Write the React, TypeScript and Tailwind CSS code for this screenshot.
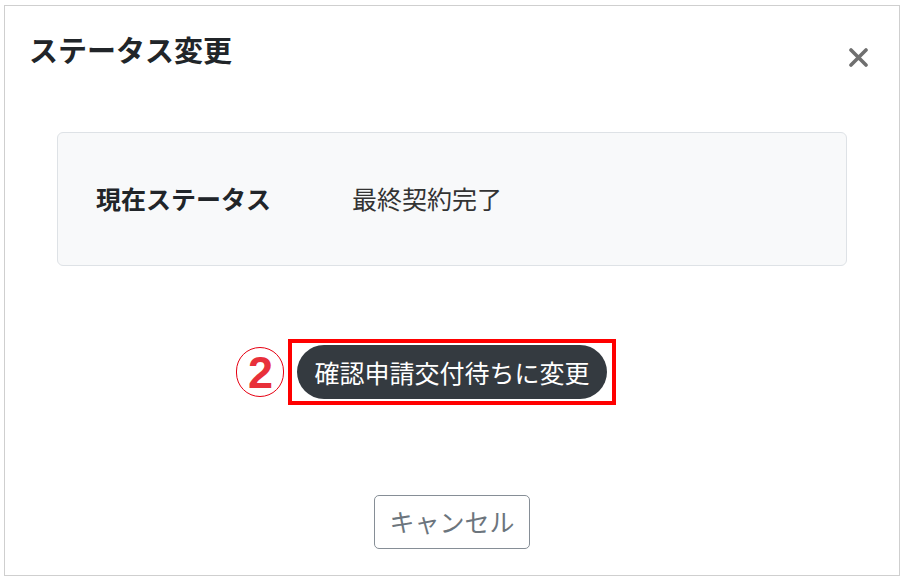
export default function App() {
    return (
        <div className="w-[903px] h-[580px] bg-white pt-[5px] pl-[4px] font-['Noto_Sans_CJK_JP',sans-serif]">
            <div className="w-[896px] h-[571px] border border-[#cfcfcf] bg-white flex flex-col">
                {/* Header */}
                <div className="flex items-start justify-between pl-[24px] pr-[31px] pt-[25px]">
                    <h1 className="text-[29px] leading-[36px] font-bold text-[#212529]">ステータス変更</h1>
                    <button className="mt-[17px] text-[#6f6f6f]">
                        <svg width="19" height="19" viewBox="0 0 19 19">
                            <path d="M2 2 L17 17 M17 2 L2 17" stroke="currentColor" strokeWidth="3.6" strokeLinecap="round" />
                        </svg>
                    </button>
                </div>

                {/* Current status */}
                <div className="mx-[52px] mt-[65px] h-[134px] rounded-[6px] border border-[#dee2e6] bg-[#f8f9fa] flex items-center pl-[38px]">
                    <span className="w-[256px] text-[25px] font-bold text-[#212529]">現在ステータス</span>
                    <span className="text-[25px] text-[#333]">最終契約完了</span>
                </div>

                {/* Action */}
                <div className="mt-[73px] flex justify-center">
                    <div className="relative border-4 border-[#ff0000] px-[5px] py-[2px]">
                        <div className="absolute right-full mr-[8px] top-1/2 -translate-y-1/2 w-[48px] h-[50px] rounded-full border-[1.5px] border-[#e60012] flex items-center justify-center">
                            <span className="font-['Liberation_Sans',sans-serif] font-bold text-[45px] leading-none text-[#e8303a]">2</span>
                        </div>
                        <button className="h-[54px] px-[17px] rounded-full bg-[#343a40] text-white text-[25px] leading-none">
                            確認申請交付待ちに変更
                        </button>
                    </div>
                </div>

                {/* Cancel */}
                <div className="mt-[90px] flex justify-center">
                    <button className="h-[54px] w-[156px] rounded-[5px] border border-[#868e96] text-[25px] text-[#6c757d]">
                        キャンセル
                    </button>
                </div>
            </div>
        </div>
    );
}
